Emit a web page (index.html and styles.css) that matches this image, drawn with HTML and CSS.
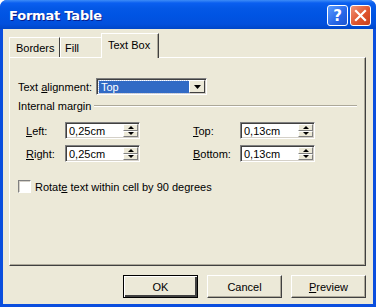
FILE: index.html
```html
<!DOCTYPE html>
<html lang="en">
<head>
    <meta charset="UTF-8">
    <title>Format Table</title>
    <link rel="stylesheet" href="styles.css">
</head>
<body>

    <div class="window">
        <!-- Title bar -->
        <div class="titlebar">
            <span class="title">Format Table</span>
            <div class="title-btns">
                <span class="tbtn help-btn">?</span>
                <span class="tbtn close-btn">
                    <svg width="13" height="13" viewBox="0 0 13 13"><path d="M2 2 L11 11 M11 2 L2 11" stroke="#fff" stroke-width="2.2" stroke-linecap="square"/></svg>
                </span>
            </div>
        </div>

        <div class="client">
            <!-- Tabs -->
            <div class="tabs">
                <span class="tab tab-borders">Borders</span>
                <span class="tab tab-fill">Fill</span>
                <span class="tab active">Text Box</span>
            </div>

            <div class="panel">
                <div class="row align-row">
                    <span class="label">Text <u>a</u>lignment:</span>
                    <div class="select">
                        <span class="select-value">Top</span>
                        <span class="drop-btn"><svg width="7" height="4" viewBox="0 0 7 4"><path d="M0 0 H7 L3.5 4 Z" fill="#000"/></svg></span>
                    </div>
                </div>

                <div class="group-title">
                    <span>Internal margin</span>
                    <span class="etched"></span>
                </div>

                <div class="margins">
                    <div class="margin-col">
                        <div class="field">
                            <span class="field-label left-label"><u>L</u>eft:</span>
                            <div class="spin"><span class="spin-value">0,25cm</span><span class="spin-btns"><span class="arrow up"></span><span class="arrow down"></span></span></div>
                        </div>
                        <div class="field">
                            <span class="field-label left-label"><u>R</u>ight:</span>
                            <div class="spin"><span class="spin-value">0,25cm</span><span class="spin-btns"><span class="arrow up"></span><span class="arrow down"></span></span></div>
                        </div>
                    </div>
                    <div class="margin-col">
                        <div class="field">
                            <span class="field-label right-label"><u>T</u>op:</span>
                            <div class="spin"><span class="spin-value">0,13cm</span><span class="spin-btns"><span class="arrow up"></span><span class="arrow down"></span></span></div>
                        </div>
                        <div class="field">
                            <span class="field-label right-label"><u>B</u>ottom:</span>
                            <div class="spin"><span class="spin-value">0,13cm</span><span class="spin-btns"><span class="arrow up"></span><span class="arrow down"></span></span></div>
                        </div>
                    </div>
                </div>

                <div class="check-row">
                    <span class="checkbox"></span>
                    <span>Rotat<u>e</u> text within cell by 90 degrees</span>
                </div>
            </div>

            <!-- Buttons -->
            <div class="buttons">
                <span class="btn default">OK</span>
                <span class="btn">Cancel</span>
                <span class="btn"><u>P</u>review</span>
            </div>
        </div>
    </div>

</body>
</html>
```

FILE: styles.css
```css
body {
    margin: 0;
    padding: 0;
    background: #fff;
    font-family: "Liberation Sans", Arial, sans-serif;
    font-size: 11px;
    color: #000;
}
u { text-decoration: underline; text-underline-offset: 1px; }

.window {
    width: 376px;
    height: 307px;
    box-sizing: border-box;
    background: #0a4ede;
    border-radius: 7px 7px 0 0;
    padding: 0 3px 3px;
    display: flex;
    flex-direction: column;
}

.titlebar {
    height: 29px;
    margin: 0 -3px;
    padding: 0 5px 0 9px;
    border-radius: 7px 7px 0 0;
    background: linear-gradient(#3d8cf7 0px, #0a5ff0 3px, #0458e6 8px, #0054e3 15px, #0250dd 24px, #0046c8 29px);
    display: flex;
    align-items: center;
    justify-content: space-between;
}
.title {
    color: #fff;
    font-weight: bold;
    font-size: 13px;
    font-family: "DejaVu Sans", sans-serif;
    letter-spacing: -0.2px;
    text-shadow: 1px 1px 0 #0a1e8c;
    margin-top: 1px;
}
.title-btns { display: flex; gap: 2px; margin-top: 2px; }
.tbtn {
    width: 21px;
    height: 21px;
    box-sizing: border-box;
    border: 1px solid #fff;
    border-radius: 3px;
    display: flex;
    align-items: center;
    justify-content: center;
    color: #fff;
    font-weight: bold;
    font-size: 15px;
    font-family: "DejaVu Sans", sans-serif;
}
.help-btn { background: linear-gradient(135deg, #5a9cff, #2766e8 60%, #1d55d0); }
.close-btn { background: linear-gradient(135deg, #f0957a, #e0552e 55%, #c8401c); }

.client {
    flex: 1;
    background: #ece9d8;
    padding: 4px 7px 0 6px;
    display: flex;
    flex-direction: column;
}

.tabs {
    display: flex;
    align-items: flex-end;
    height: 24px;
    position: relative;
    z-index: 1;
}
.tab {
    height: 20px;
    box-sizing: border-box;
    padding: 4px 0 0 6px;
    border-top: 1px solid #fff;
    border-left: 1px solid #fff;
    background: #ece9d8;
}
.tab-borders { width: 51px; border-right: 1px solid #404040; }
.tab-fill { width: 41px; padding-left: 4px; }
.tab.active {
    width: 58px;
    height: 25px;
    padding: 5px 0 0 6px;
    border-top: 1px solid #fff;
    border-left: 1px solid #fff;
    border-right: 1px solid #404040;
    box-shadow: inset -1px 0 0 #aca899;
    margin-bottom: -1px;
}

.panel {
    height: 209px;
    box-sizing: border-box;
    border: 1px solid #fff;
    border-right-color: #404040;
    border-bottom-color: #404040;
    box-shadow: inset -1px -1px 0 #aca899;
    padding: 0 8px 0 8px;
}

.row { display: flex; align-items: center; }
.align-row { margin-top: 20px; height: 17px; }
.align-row .label { width: 78px; }

.select {
    width: 111px;
    height: 17px;
    box-sizing: border-box;
    background: #fff;
    border: 1px solid;
    border-color: #808080 #fff #fff #808080;
    box-shadow: inset 1px 1px 0 #404040, inset -1px -1px 0 #d4d0c8;
    display: flex;
    align-items: center;
    padding: 2px;
}
.select-value {
    flex: 1;
    height: 12px;
    line-height: 12px;
    background: #316ac5;
    color: #fff;
    padding-left: 2px;
    outline: 1px dotted #c4d2ef;
    outline-offset: 0;
}
.drop-btn {
    width: 16px;
    height: 13px;
    margin: -1px -1px -1px 0;
    box-sizing: border-box;
    background: #ece9d8;
    border: 1px solid;
    border-color: #fff #404040 #404040 #fff;
    display: flex;
    align-items: center;
    justify-content: center;
}

.group-title {
    display: flex;
    align-items: center;
    margin-top: 4px;
    height: 14px;
}
.etched {
    flex: 1;
    margin-left: 3px;
    border-top: 1px solid #aca899;
    border-bottom: 1px solid #fff;
}

.margins {
    display: flex;
    margin-top: 9px;
    padding-left: 8px;
}
.margin-col { display: flex; flex-direction: column; gap: 6px; }
.margin-col + .margin-col { margin-left: 53px; }
.field { display: flex; align-items: center; height: 17px; }
.left-label { width: 39px; }
.right-label { width: 47px; }

.spin {
    width: 75px;
    height: 17px;
    box-sizing: border-box;
    background: #fff;
    border: 1px solid;
    border-color: #808080 #fff #fff #808080;
    box-shadow: inset 1px 1px 0 #404040, inset -1px -1px 0 #d4d0c8;
    display: flex;
    align-items: center;
    padding: 1px 1px 1px 3px;
}
.spin-value { flex: 1; }
.spin-btns {
    width: 15px;
    height: 13px;
    display: flex;
    flex-direction: column;
}
.arrow {
    flex: 1;
    box-sizing: border-box;
    background: #ece9d8;
    border: 1px solid;
    border-color: #fff #808080 #808080 #fff;
    display: flex;
    align-items: center;
    justify-content: center;
}
.arrow::after {
    content: "";
    border-left: 3px solid transparent;
    border-right: 3px solid transparent;
}
.arrow.up::after { border-bottom: 3px solid #000; }
.arrow.down::after { border-top: 3px solid #000; }

.check-row {
    display: flex;
    align-items: center;
    height: 13px;
    margin-top: 18px;
    gap: 4px;
}
.checkbox {
    width: 13px;
    height: 13px;
    box-sizing: border-box;
    background: #fff;
    border: 1px solid;
    border-color: #808080 #fff #fff #808080;
    box-shadow: inset 1px 1px 0 #d4d0c8;
}

.buttons {
    display: flex;
    justify-content: flex-end;
    gap: 9px;
    margin-top: 9px;
}
.btn {
    width: 75px;
    height: 23px;
    box-sizing: border-box;
    border: 1px solid;
    border-color: #fff #404040 #404040 #fff;
    box-shadow: inset -1px -1px 0 #aca899;
    background: #ece9d8;
    display: flex;
    align-items: center;
    justify-content: center;
}
.btn.default {
    border: 1px solid #000;
    box-shadow: inset 1px 1px 0 #fff, inset -2px -2px 0 #404040;
}
```
